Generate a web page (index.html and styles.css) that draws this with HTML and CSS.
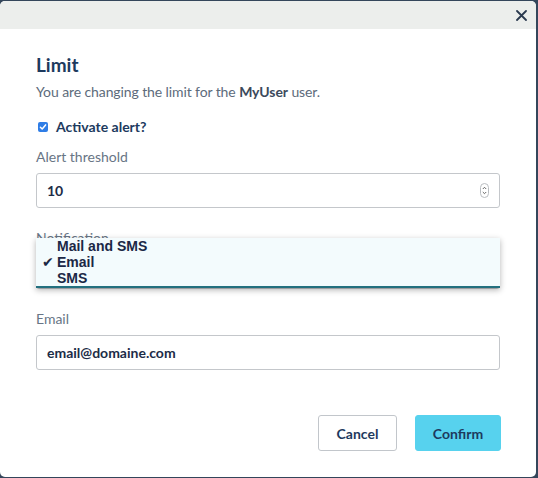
FILE: index.html
```html
<!DOCTYPE html>
<html>
<head>
<meta charset="utf-8">
<link rel="stylesheet" href="styles.css">
</head>
<body>
<div class="modal">
  <div class="modal-header">
    <button class="close" aria-label="Close">
      <svg width="11" height="11" viewBox="0 0 11 11"><path d="M1 1L10 10M10 1L1 10" stroke="#2b3a4f" stroke-width="1.8" stroke-linecap="round"/></svg>
    </button>
  </div>
  <div class="modal-body">
    <h2 class="title">Limit</h2>
    <p class="lead">You are changing the limit for the <strong>MyUser</strong> user.</p>
    <label class="check">
      <span class="box"><svg width="10" height="10" viewBox="0 0 10 10"><path d="M2.4 5.2L4.2 7L7.6 2.9" fill="none" stroke="#fff" stroke-width="1.5" stroke-linecap="round" stroke-linejoin="round"/></svg></span>
      Activate alert?
    </label>
    <div class="field">
      <div class="label">Alert threshold</div>
      <div class="input">
        <span>10</span>
        <span class="spin"><svg width="9" height="15" viewBox="0 0 9 15"><rect x="0.5" y="0.5" width="8" height="14" rx="4" fill="#fff" stroke="#b9bcc0"/><path d="M2.8 6L4.5 4.3L6.2 6M2.8 9L4.5 10.7L6.2 9" fill="none" stroke="#555" stroke-width="0.9"/></svg></span>
      </div>
    </div>
    <div class="field">
      <div class="label">Notification</div>
      <div class="select-wrap">
        <div class="input">Email</div>
        <ul class="popup">
          <li>Mail and SMS</li>
          <li class="sel"><span class="tick">✔</span>Email</li>
          <li>SMS</li>
        </ul>
      </div>
    </div>
    <div class="field">
      <div class="label">Email</div>
      <div class="input">email@domaine.com</div>
    </div>
    <div class="actions">
      <button class="btn btn-default">Cancel</button>
      <button class="btn btn-primary">Confirm</button>
    </div>
  </div>
</div>
</body>
</html>
```
FILE: styles.css
```css
html, body {
  margin: 0;
  padding: 0;
}
body {
  background: #34465b;
  width: 538px;
  height: 478px;
  overflow: hidden;
  font-family: "Lato", "Noto Sans", sans-serif;
}
.modal {
  margin-top: 1px;
  width: 536px;
  height: 476px;
  background: #fff;
  border-radius: 5px;
  overflow: hidden;
}
.modal-header {
  height: 28px;
  background: #eceeec;
  display: flex;
  justify-content: flex-end;
  align-items: center;
}
.close {
  border: 0;
  background: none;
  padding: 0;
  width: 11px;
  height: 11px;
  margin-right: 9px;
  display: flex;
}
.modal-body {
  padding: 24px 36px 0 36px;
}
.title {
  margin: 0;
  font-size: 19px;
  line-height: 24px;
  font-weight: 700;
  color: #1d3a5e;
}
.lead {
  margin: 5px 0 0;
  font-size: 14px;
  line-height: 20px;
  letter-spacing: -0.1px;
  color: #5d6b7b;
}
.lead strong {
  color: #3c4a5c;
  font-weight: 700;
}
.check {
  margin-top: 15px;
  display: flex;
  align-items: center;
  font-size: 14px;
  line-height: 20px;
  font-weight: 700;
  color: #1d3a5e;
}
.box {
  width: 10px;
  height: 10px;
  border-radius: 2px;
  background: #2f7de6;
  margin-left: 2px;
  margin-right: 8px;
  display: flex;
}
.field {
  margin-top: 20px;
}
.check + .field {
  margin-top: 10px;
}
.label {
  font-size: 14px;
  line-height: 20px;
  color: #687585;
}
.input {
  margin-top: 6px;
  height: 35px;
  box-sizing: border-box;
  border: 1px solid #c4c7cb;
  border-radius: 3px;
  padding: 0 10px;
  display: flex;
  align-items: center;
  justify-content: space-between;
  font-size: 14px;
  font-weight: 700;
  color: #1c2c47;
}
.spin {
  display: flex;
}
.select-wrap {
  position: relative;
}
.popup {
  position: absolute;
  left: 0;
  right: 0;
  top: -16px;
  height: 50px;
  box-sizing: border-box;
  margin: 0;
  padding: 0;
  list-style: none;
  background: #f3fbfd;
  border-bottom: 2px solid #23707f;
  box-shadow: 0 2px 6px rgba(0, 0, 0, 0.3);
  font-family: "Liberation Sans", Arial, sans-serif;
  font-weight: 700;
  font-size: 14px;
  line-height: 16px;
  color: #1b2846;
}
.popup li {
  padding-left: 21px;
  position: relative;
}
.tick {
  position: absolute;
  left: 6px;
  top: 0;
  font-family: "DejaVu Sans", sans-serif;
  font-size: 14px;
  line-height: 16px;
  font-weight: 400;
}
.actions {
  margin-top: 45px;
  margin-right: -1px;
  display: flex;
  justify-content: flex-end;
  gap: 18px;
}
.btn {
  height: 36px;
  box-sizing: border-box;
  border-radius: 3px;
  font-family: "Lato", "Noto Sans", sans-serif;
  font-size: 14px;
  font-weight: 700;
  color: #1d3a5e;
  cursor: pointer;
}
.btn-default {
  width: 79px;
  background: #fff;
  border: 1px solid #c2c6cb;
}
.btn-primary {
  width: 86px;
  background: #57d2ee;
  border: 1px solid #57d2ee;
}
```
